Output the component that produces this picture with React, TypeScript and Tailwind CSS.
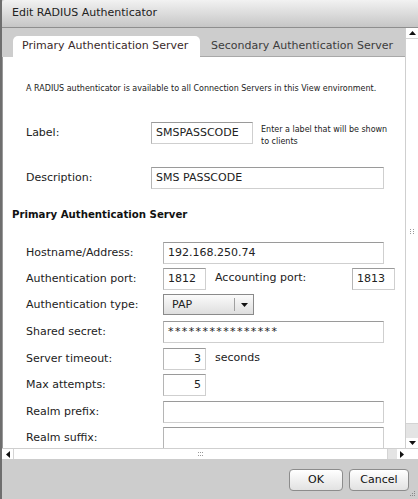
import React from 'react';

const font = { fontFamily: '"DejaVu Sans", Verdana, sans-serif' };

const TextBox: React.FC<{ value?: string; w: string; right?: boolean; wide?: boolean }> = ({
  value = '',
  w,
  right,
  wide,
}) => (
  <div
    className={`${w} h-[22px] shrink-0 border border-[#cfcfcf] border-t-[#9a9a9a] border-l-[#b5b5b5] bg-white px-[4px] flex items-center text-[11px] text-[#222] ${
      right ? 'justify-end' : ''
    } ${wide ? 'tracking-[1.4px]' : ''}`}
  >
    {value}
  </div>
);

const Row: React.FC<{ label: string; labelW: string; children: React.ReactNode; className?: string }> = ({
  label,
  labelW,
  children,
  className = '',
}) => (
  <div className={`flex items-start ${className}`}>
    <div className={`${labelW} shrink-0 pt-[3px] text-[11px] text-[#222]`}>{label}</div>
    {children}
  </div>
);

const Arrow: React.FC<{ dir: 'up' | 'down' | 'left' | 'right' }> = ({ dir }) => {
  const pts = {
    up: '0,4 3.5,0 7,4',
    down: '0,0 3.5,4 7,0',
    left: '4,0 0,3.5 4,7',
    right: '0,0 4,3.5 0,7',
  }[dir];
  const horiz = dir === 'left' || dir === 'right';
  return (
    <svg width={horiz ? 4 : 7} height={horiz ? 7 : 4} viewBox={horiz ? '0 0 4 7' : '0 0 7 4'}>
      <polygon points={pts} fill="#111" />
    </svg>
  );
};

const Grip: React.FC = () => (
  <svg width="5" height="5" viewBox="0 0 5 5">
    <rect x="0" y="0" width="1" height="1" fill="#999" />
    <rect x="3" y="0" width="1" height="1" fill="#999" />
    <rect x="0" y="2" width="1" height="1" fill="#999" />
    <rect x="3" y="2" width="1" height="1" fill="#999" />
    <rect x="0" y="4" width="1" height="1" fill="#999" />
    <rect x="3" y="4" width="1" height="1" fill="#999" />
  </svg>
);

export default function App() {
  return (
    <div className="w-[418px] h-[499px] bg-[#6e6e6e] pl-[2px] overflow-hidden" style={font}>
      <div className="flex h-full flex-col bg-[#cdcdcd]">
        {/* title bar */}
        <div className="h-[28px] shrink-0 rounded-tl-[3px] border-b border-[#8e8e8e] bg-gradient-to-b from-[#f2f2f2] to-[#c6c6c6] pl-[10px] flex items-center text-[11px] text-[#222]">
          Edit RADIUS Authenticator
        </div>

        <div className="flex h-[420px] shrink-0">
          {/* scroll viewport */}
          <div className="w-[403px] overflow-hidden flex flex-col">
            <div className="flex h-[29px] shrink-0 items-end pl-[11px]">
              <div className="h-[21px] w-[187px] rounded-t-[5px] bg-white flex items-center pl-[9px] text-[11px] text-[#3a2a2a]">
                Primary Authentication Server
              </div>
              <div className="h-[21px] flex-1 border-b border-[#a8a8a8] flex items-center pl-[11px] text-[11px] text-[#3c3c3c]">
                Secondary Authentication Server
              </div>
            </div>
            <div className="flex-1 bg-white border-l border-[#9a9a9a] pl-[23px] pt-[25px]">
              <div className="text-[8px] text-[#222] leading-[14px] whitespace-nowrap">
                A RADIUS authenticator is available to all Connection Servers in this View environment.
              </div>

              <Row label="Label:" labelW="w-[125px]" className="mt-[26px]">
                <TextBox value="SMSPASSCODE" w="w-[102px]" />
                <div className="ml-[8px] pt-[2px] text-[8px] leading-[12px] text-[#222] w-[132px]">
                  Enter a label that will be shown to clients
                </div>
              </Row>

              <Row label="Description:" labelW="w-[125px]" className="mt-[19px]">
                <TextBox value="SMS PASSCODE" w="w-[233px]" />
              </Row>

              <div className="-ml-[14px] mt-[18px] text-[10.2px] font-bold text-[#111]">
                Primary Authentication Server
              </div>

              <Row label="Hostname/Address:" labelW="w-[137px]" className="mt-[20px]">
                <TextBox value="192.168.250.74" w="w-[221px]" />
              </Row>

              <Row label="Authentication port:" labelW="w-[137px]" className="mt-[4px]">
                <TextBox value="1812" w="w-[43px]" />
                <div className="ml-[9px] w-[137px] pt-[2px] text-[11px] text-[#222]">Accounting port:</div>
                <TextBox value="1813" w="w-[43px]" />
              </Row>

              <Row label="Authentication type:" labelW="w-[137px]" className="mt-[4px]">
                <div className="h-[21px] w-[91px] border border-[#8a8a8a] bg-gradient-to-b from-[#fbfbfb] to-[#dedede] flex items-center text-[11px] text-[#222]">
                  <span className="flex-1 pl-[8px]">PAP</span>
                  <span className="h-[13px] w-px bg-[#a0a0a0]" />
                  <span className="w-[18px] flex justify-center">
                    <Arrow dir="down" />
                  </span>
                </div>
              </Row>

              <Row label="Shared secret:" labelW="w-[137px]" className="mt-[6px]">
                <TextBox value="****************" w="w-[221px]" wide />
              </Row>

              <Row label="Server timeout:" labelW="w-[137px]" className="mt-[5px]">
                <TextBox value="3" w="w-[43px]" right />
                <div className="ml-[9px] pt-[2px] text-[11px] text-[#222]">seconds</div>
              </Row>

              <Row label="Max attempts:" labelW="w-[137px]" className="mt-[4px]">
                <TextBox value="5" w="w-[43px]" right />
              </Row>

              <Row label="Realm prefix:" labelW="w-[137px]" className="mt-[5px]">
                <TextBox w="w-[221px]" />
              </Row>

              <Row label="Realm suffix:" labelW="w-[137px]" className="mt-[4px]">
                <TextBox w="w-[221px]" />
              </Row>
            </div>
          </div>

          {/* vertical scrollbar */}
          <div className="w-[13px] flex flex-col bg-[#e4e4e4] border-l border-[#cfcfcf]">
            <div className="h-[10px] bg-white flex items-center justify-center">
              <Arrow dir="up" />
            </div>
            <div className="h-[386px] bg-white border-y border-[#d4d4d4] flex items-center justify-center">
              <Grip />
            </div>
            <div className="flex-1" />
            <div className="h-[10px] bg-white flex items-center justify-center">
              <Arrow dir="down" />
            </div>
          </div>
        </div>

        {/* horizontal scrollbar */}
        <div className="flex h-[11px] shrink-0 border-t border-[#cfcfcf]">
          <div className="w-[11px] bg-white flex items-center justify-center">
            <Arrow dir="left" />
          </div>
          <div className="w-[375px] bg-white border-x border-[#d4d4d4] flex items-center justify-center">
            <div className="rotate-90">
              <Grip />
            </div>
          </div>
          <div className="w-[9px] bg-[#e4e4e4]" />
          <div className="w-[9px] bg-white flex items-center justify-center">
            <Arrow dir="right" />
          </div>
          <div className="flex-1 bg-white" />
        </div>

        {/* footer */}
        <div className="relative flex-1 flex items-start justify-end gap-[6px] pt-[10px] pr-[9px]">
          <button className="h-[22px] w-[54px] rounded-[4px] border border-[#8c8c8c] bg-gradient-to-b from-white to-[#e2e2e2] text-[11px] text-[#111]">
            OK
          </button>
          <button className="h-[22px] w-[60px] rounded-[4px] border border-[#8c8c8c] bg-gradient-to-b from-white to-[#e2e2e2] text-[11px] text-[#111]">
            Cancel
          </button>
          <div className="absolute right-[2px] bottom-[2px]">
            <svg width="6" height="6" viewBox="0 0 6 6">
              <rect x="4" y="0" width="1" height="1" fill="#888" />
              <rect x="2" y="2" width="1" height="1" fill="#888" />
              <rect x="4" y="2" width="1" height="1" fill="#888" />
              <rect x="0" y="4" width="1" height="1" fill="#888" />
              <rect x="2" y="4" width="1" height="1" fill="#888" />
              <rect x="4" y="4" width="1" height="1" fill="#888" />
            </svg>
          </div>
        </div>
      </div>
    </div>
  );
}
